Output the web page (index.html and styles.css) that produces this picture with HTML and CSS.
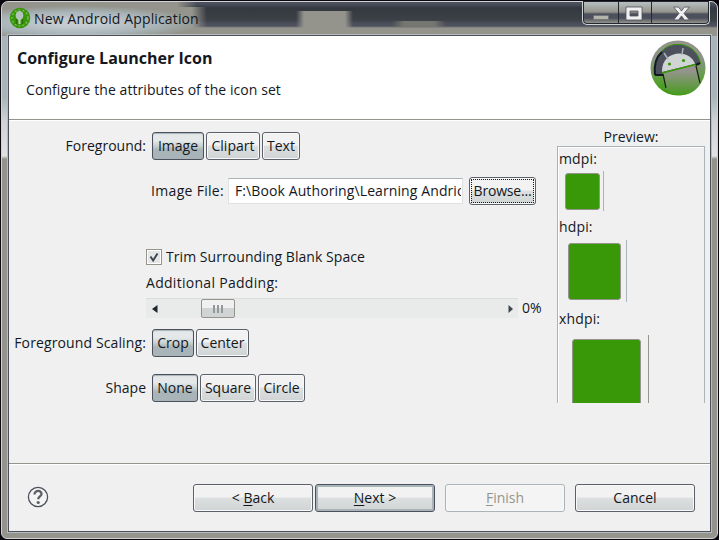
FILE: index.html
```html
<!DOCTYPE html>
<html lang="en">
<head>
<meta charset="utf-8">
<title>New Android Application</title>
<link rel="stylesheet" href="styles.css">
</head>
<body>
<div class="window">
  <header class="titlebar">
    <svg class="app-icon" viewBox="0 0 22 22">
      <circle cx="11" cy="11" r="10.3" fill="#389808"/>
      <circle cx="11" cy="11" r="8" fill="none" stroke="#8cb878" stroke-width="1.2" stroke-dasharray="2 2"/>
      <ellipse cx="10.5" cy="8.500" rx="3.800" ry="4.500" fill="#b4c4bc"/>
      <path d="M7.500 12v5M13.500 12v5" stroke="#287008" stroke-width="1.500"/>
      <path d="M9.500 12h2v5h-2z" fill="#c0d0c0"/>
    </svg>
    <span class="title">New Android Application</span>
    <div class="controls">
      <span class="control minimize"><svg viewBox="0 0 34 24"><rect x="10" y="14.500" width="15" height="4" fill="#b4b4ac" stroke="#686c70" stroke-width=".6"/></svg></span>
      <span class="control maximize"><svg viewBox="0 0 32 24"><path fill-rule="evenodd" d="M7 6h16v13H7zM11 10v5h8v-5z" fill="#f0f0f0" stroke="#4c505c" stroke-width=".8"/></svg></span>
      <span class="control close"><svg viewBox="0 0 58 24"><path d="M22 6h5l3 4 3-4h5l-5.500 6.500L38 19h-5l-3-4-3 4h-5l5.500-6.500z" fill="#f0f0f0" stroke="#4c505c" stroke-width=".8"/></svg></span>
    </div>
  </header>
  <main class="client">
    <section class="banner">
      <div>
        <h1>Configure Launcher Icon</h1>
        <p>Configure the attributes of the icon set</p>
      </div>
      <svg class="logo" viewBox="0 0 56 56">
        <defs>
          <linearGradient id="disc" x2="0" y2="1"><stop offset="0" stop-color="#94948c"/><stop offset=".35" stop-color="#8a9484"/><stop offset=".72" stop-color="#5aa038"/><stop offset="1" stop-color="#389808"/></linearGradient>
          <linearGradient id="torso" x2="0" y2="1"><stop offset=".2" stop-color="#94948c"/><stop offset="1" stop-color="#469c1c"/></linearGradient>
        </defs>
        <circle cx="28" cy="28" r="27.500" fill="url(#disc)"/>
        <path d="M5 35C3 20 11 6 25 4.500c15-1.500 24 9 25.500 19L46 25 13 35z" fill="#4c505c" stroke="#389808"/>
        <path d="M5 35C4 26 6 17 12 12M50 23l-4 2M5 35h8" fill="none" stroke="#141820" stroke-width="2"/>
        <path d="M13 33l32-8 6 18c-8 14-26 16-36 6z" fill="url(#torso)"/>
        <path d="M12 32C11 10 40 8 45 24z" fill="#d0d4d4"/>
        <path d="M18 19l-4-6M32 15l1-7" stroke="#a8b4b8" stroke-width="1.500"/>
        <path d="M12 33l33-8.500" stroke="#389808" stroke-width="1.400"/>
        <path d="M13 34l3 14M46 26l4 17" stroke="#182010" stroke-width="1.200"/>
        <circle cx="19.500" cy="24" r="1.600" fill="#389808"/><circle cx="33.500" cy="20.500" r="1.600" fill="#389808"/>
      </svg>
    </section>
    <section class="body">
      <div class="form">
        <div class="row foreground">
          <span class="label">Foreground:</span>
          <div class="toggles"><button class="btn selected w52">Image</button><button class="btn w54">Clipart</button><button class="btn w38">Text</button></div>
        </div>
        <div class="row file">
          <span class="label">Image File:</span>
          <div class="path"><span>F:\Book Authoring\Learning Andrio</span></div>
          <button class="btn browse">Browse...</button>
        </div>
        <div class="options">
          <label class="check"><span class="box"><svg viewBox="0 0 16 16"><path d="M4 7.500l3 4.500L12 4" fill="none" stroke="#3c4450" stroke-width="2.200"/></svg></span><span class="trim">Trim Surrounding Blank Space</span></label>
          <span class="padding-label">Additional Padding:</span>
          <div class="slider-row">
            <div class="slider">
              <svg class="arrow" viewBox="0 0 6 8"><path d="M5.500 0v8L0 4z" fill="#20242c"/></svg>
              <span class="thumb"><i></i><i></i><i></i></span>
              <svg class="arrow right" viewBox="0 0 6 8"><path d="M.5 0v8L5 4z" fill="#3c4450"/></svg>
            </div>
            <span class="percent">0%</span>
          </div>
        </div>
        <div class="row scaling">
          <span class="label">Foreground Scaling:</span>
          <div class="toggles"><button class="btn selected w42">Crop</button><button class="btn w53">Center</button></div>
        </div>
        <div class="row shape">
          <span class="label">Shape</span>
          <div class="toggles"><button class="btn selected w46">None</button><button class="btn w56">Square</button><button class="btn w47">Circle</button></div>
        </div>
      </div>
      <aside class="preview">
        <span class="preview-title">Preview:</span>
        <div class="preview-box">
          <span>mdpi:</span>
          <div class="sample mdpi"><b></b></div>
          <span>hdpi:</span>
          <div class="sample hdpi"><b></b></div>
          <span>xhdpi:</span>
          <div class="sample xhdpi"><b></b></div>
        </div>
      </aside>
    </section>
    <footer class="footer">
      <svg class="help" viewBox="0 0 22 22"><circle cx="11" cy="11" r="9.600" fill="#f4f4f4" stroke="#4c505c" stroke-width="1.300"/><path d="M7.500 8.500C7.500 3.500 15 4 14.500 8.300c-.3 2-3.300 2.500-3.300 5" fill="none" stroke="#5c6068" stroke-width="2.300"/><circle cx="11.200" cy="16.500" r="1.600" fill="#5c6068"/></svg>
      <button class="btn wide back"><span>&lt; <u>B</u>ack</span></button>
      <button class="btn wide default"><span><u>N</u>ext &gt;</span></button>
      <button class="btn wide disabled"><span><u>F</u>inish</span></button>
      <button class="btn wide">Cancel</button>
    </footer>
  </main>
</div>
</body>
</html>
```

FILE: styles.css
```css
* { box-sizing: border-box; }
body {
  margin: 0;
  width: 719px;
  height: 540px;
  overflow: hidden;
  background: #0c0810;
  color: #14181e;
  font: 14px/20px "Open Sans", "Noto Sans", sans-serif;
}
svg { display: block; }
.window {
  margin: 1px;
  width: 717px;
  height: 538px;
  padding: 0 6px 6px;
  border: 1px solid #d0d4d4;
  border-radius: 7px 7px 6px 6px;
  background:
    radial-gradient(ellipse 125px 17px at 75px 21px, #c4ccd0 20%, #a8b4b8 65%, #a8b4b800 100%) no-repeat 0 0 / 200px 34px,
    linear-gradient(90deg, #94948c 190px, #94948c00 205px) no-repeat 0 5px / 210px 29px,
    linear-gradient(90deg, #94948c 175px, #94948c00 195px) no-repeat 0 0 / 200px 5px,
    linear-gradient(90deg, #94948c00, #94948c 8px 49px, #94948c00 57px) no-repeat 294px 9px / 58px 18px,
    linear-gradient(90deg, #74766f00, #74766f 12px 42px, #74766f00 54px) no-repeat 390px 19px / 54px 6px,
    linear-gradient(#4c505c 2px, #34383f 6px, #3c4047 18px, #4c505c 22px, #4c505c 24px, #94948c 26px) no-repeat 0 0 / 100% 34px,
    linear-gradient(#a8b4b8 34px, #a8b4b8 95px, #d0d4d4 120px, #e0e2e2 154px, #94948c 157px);
}
.titlebar {
  display: flex;
  height: 33px;
  padding-left: 1px;
}
.app-icon { width: 22px; height: 22px; margin-top: 5px; }
.title { margin: 7px 0 0 3px; white-space: nowrap; letter-spacing: .13px; }
.controls {
  display: flex;
  width: 128px;
  height: 24px;
  margin: -1px 1px 0 auto;
  border: 1px solid #d0d4d4;
  border-top: 0;
  border-radius: 0 0 5px 5px;
  box-shadow: inset 0 0 0 1px #242830;
  background: linear-gradient(#b4bcbc 2px, #94948c 11px, #4c505c 13px, #4c505c 17px, #94948c 22px);
}
.control { display: block; height: 23px; }
.control + .control { border-left: 1px solid #242830; }
.control svg { height: 24px; width: 100%; }
.minimize { width: 35px; }
.maximize { width: 33px; }
.close { width: 58px; }
.client {
  width: 703px;
  height: 497px;
  border: 1px solid #4c505c;
  box-shadow: 0 0 0 1px #b4bcbc;
  background: #f0f0f0;
}
.banner {
  display: flex;
  justify-content: space-between;
  height: 84px;
  padding: 4px 4px 0 8px;
  border-bottom: 1px solid #94948c;
  background: #fff;
}
h1 {
  margin: 8px 0 0;
  font-size: 16px;
  font-weight: 700;
  line-height: 20px;
  white-space: nowrap;
}
p { margin: 12px 0 0 9px; letter-spacing: .07px; white-space: nowrap; }
.logo { width: 56px; height: 56px; }
.body {
  display: flex;
  height: 343px;
  border-top: 1px solid #fff;
}
.form { width: 548px; padding-top: 11px; }
.row { display: flex; height: 28px; align-items: center; }
.label { width: 137px; margin-right: 6px; text-align: right; white-space: nowrap; }
.scaling .label { letter-spacing: .12px; }
.toggles { display: flex; gap: 2px; }
.btn {
  height: 28px;
  padding: 0;
  border: 1px solid #5c6068;
  border-radius: 3px;
  box-shadow: inset 0 0 0 1px #f8f8f8;
  background: linear-gradient(#f2f2f2 45%, #dcdfdf 52%, #d0d4d4);
  color: inherit;
  font: inherit;
  white-space: nowrap;
}
.selected {
  border-color: #4c505c;
  box-shadow: inset 0 1px 1px #a8b4b8;
  background: linear-gradient(#e4e8e8 30%, #c8d0d2 50%, #a8b4b8 65%);
}
.w52 { width: 52px; } .w54 { width: 54px; } .w38 { width: 38px; }
.w42 { width: 42px; } .w53 { width: 53px; }
.w46 { width: 46px; } .w56 { width: 56px; } .w47 { width: 47px; }
.file { margin-top: 17px; }
.file .label { width: 215px; margin-right: 4px; letter-spacing: .3px; }
.path {
  width: 235px;
  height: 26px;
  padding: 2px 1px 0 6px;
  border: 1px solid #e0e2e2;
  border-top-color: #a8b4b8;
  background: #fff;
}
.path span { display: block; width: 226px; overflow: hidden; white-space: nowrap; letter-spacing: .1px; }
.browse {
  width: 67px;
  margin-left: 6px;
  letter-spacing: -.2px;
  outline: 1px dotted #14181e;
  outline-offset: -3px;
}
.options { display: flex; flex-direction: column; margin: 43px 0 0 137px; }
.check { display: flex; height: 18px; align-items: center; }
.box { width: 16px; height: 16px; border: 1px solid #94948c; background: #e4e6e6; box-shadow: inset 0 0 0 1px #fff; }
.box svg { width: 14px; height: 14px; }
.trim { margin-left: 4px; letter-spacing: .06px; }
.padding-label { margin-top: 7px; height: 20px; letter-spacing: .29px; }
.slider-row { display: flex; height: 20px; margin-top: 5px; align-items: center; }
.slider {
  display: flex;
  width: 372px;
  height: 20px;
  padding: 0 4px 0 6px;
  align-items: center;
  background: #e9eaea;
  border-top: 1px solid #dcdede;
}
.arrow { width: 6px; height: 8px; }
.arrow.right { margin-left: auto; }
.thumb {
  display: flex;
  width: 34px;
  height: 19px;
  margin-left: 43px;
  gap: 2px;
  align-items: center;
  justify-content: center;
  border: 1px solid #94948c;
  border-radius: 2px;
  background: linear-gradient(#f0f0f0 45%, #d0d4d4 50%);
}
.thumb i { width: 2px; height: 8px; background: #94989a; }
.percent { margin-left: 4px; }
.scaling { margin-top: 11px; }
.shape { margin-top: 17px; }
.preview { width: 148px; }
.preview-title { display: block; height: 25px; padding-top: 6px; text-align: center; }
.preview-box {
  height: 257px;
  overflow: hidden;
  border: 1px solid #a8b4b8;
  border-bottom: 0;
  box-shadow: inset 1px 1px #fff;
}
.preview-box > span { display: block; height: 24px; padding: 2px 0 0 1px; letter-spacing: .15px; }
.sample { border-right: 1px solid #a8b4b8; }
.sample b { display: block; background: #389808; border: 1px solid #94948c; border-radius: 3px; }
.mdpi { width: 46px; height: 40px; margin-bottom: 4px; padding: 2px 0 0 7px; }
.mdpi b { width: 35px; height: 37px; }
.hdpi { width: 69px; height: 62px; margin: 1px 0 5px; padding: 3px 0 0 10px; }
.hdpi b { width: 53px; height: 57px; }
.xhdpi { width: 91px; height: 90px; margin-top: 4px; padding: 4px 0 0 14px; border-color: #94948c; }
.xhdpi b { width: 69px; height: 72px; }
.footer {
  display: flex;
  height: 67px;
  padding: 20px 14px 0 18px;
  border-top: 1px solid #94948c;
  box-shadow: inset 0 1px #fff;
}
.help { width: 22px; height: 22px; margin-top: 2px; }
.wide { width: 120px; }
.back { margin: 0 2px 0 144px; }
.default { border-color: #4c505c; box-shadow: inset 0 0 0 2px #a8b4b8; }
.disabled { margin: 0 10px; border-color: #a8b4b8; background: #f4f4f4; color: #94948c; }
u { text-underline-offset: 2px; }
```
